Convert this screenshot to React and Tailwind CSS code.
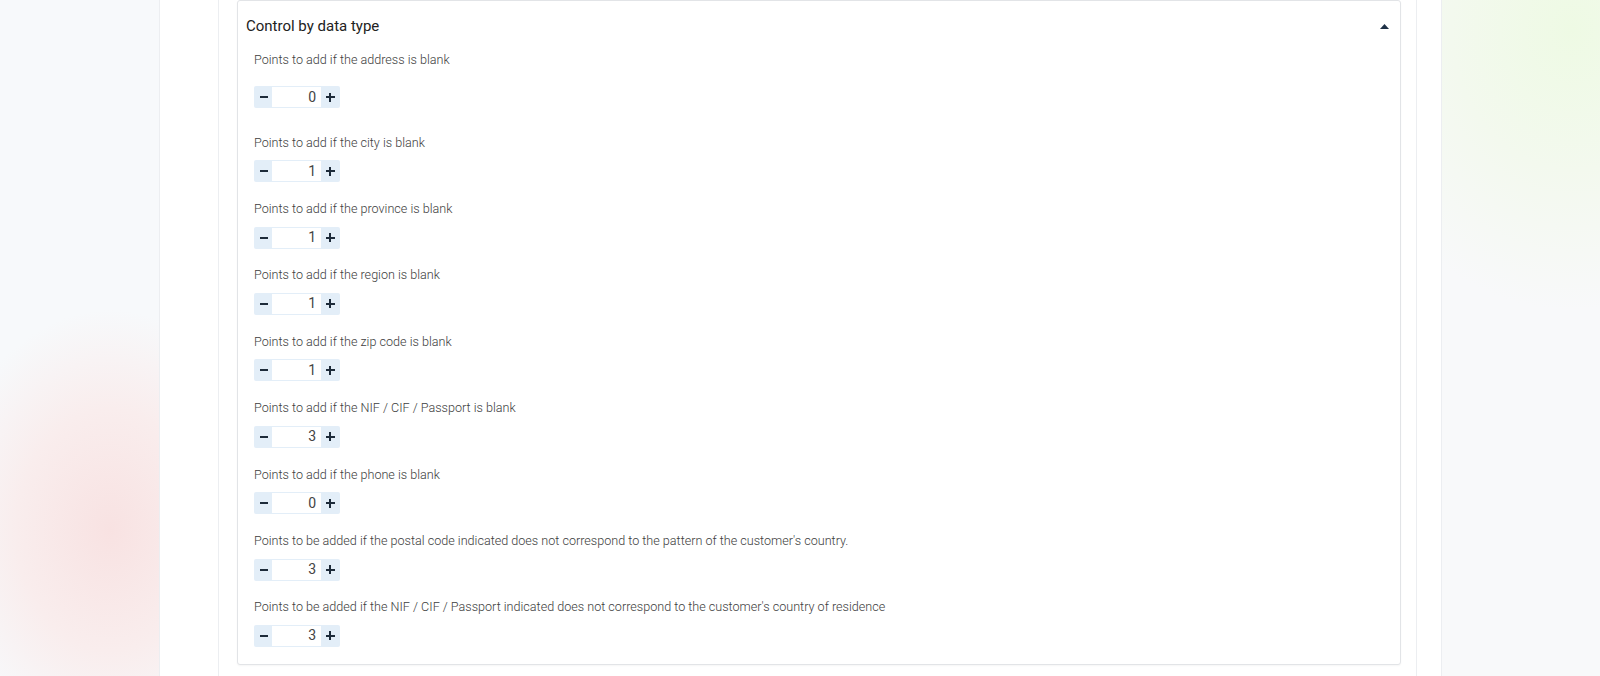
import React from "react";

const items = [
  { label: "Points to add if the address is blank", value: 0 },
  { label: "Points to add if the city is blank", value: 1 },
  { label: "Points to add if the province is blank", value: 1 },
  { label: "Points to add if the region is blank", value: 1 },
  { label: "Points to add if the zip code is blank", value: 1 },
  { label: "Points to add if the NIF / CIF / Passport is blank", value: 3 },
  { label: "Points to add if the phone is blank", value: 0 },
  {
    label:
      "Points to be added if the postal code indicated does not correspond to the pattern of the customer's country.",
    value: 3,
  },
  {
    label:
      "Points to be added if the NIF / CIF / Passport indicated does not correspond to the customer's country of residence",
    value: 3,
  },
];

function Spinner({ value }) {
  return (
    <div className="flex h-[22px] w-[86px] items-stretch rounded-[2px] bg-[#e3eef8] p-[1px]">
      <button className="flex w-[17px] items-center justify-center">
        <span className="block h-[2px] w-[8px] bg-[#1d2b3a]" />
      </button>
      <div className="flex flex-1 items-center justify-end bg-white pr-[5px] text-[14px] text-[#444]">
        {value}
      </div>
      <button className="relative flex w-[18px] items-center justify-center">
        <span className="absolute block h-[2px] w-[9px] bg-[#1d2b3a]" />
        <span className="absolute block h-[9px] w-[2px] bg-[#1d2b3a]" />
      </button>
    </div>
  );
}

export default function App() {
  return (
    <div
      className="flex h-[676px] w-[1600px] overflow-hidden"
      style={{ fontFamily: "Roboto, 'Liberation Sans', sans-serif" }}
    >
      <div className="w-[159px] shrink-0 bg-[radial-gradient(ellipse_170px_220px_at_110px_530px,#f8e2e2_0%,#f9eded_55%,#f7f9fb_100%)]" />
      <div className="w-[1283px] shrink-0 border-x border-[#eceef1] bg-white pl-[58px] pr-[24px]">
        <div className="h-full border-x border-[#eceef1] pl-[18px] pr-[15px]">
          <div className="rounded-[3px] border border-[#e2e4e7] bg-white pb-[17px] shadow-[0_1px_2px_rgba(0,0,0,0.04)]">
            <div className="flex items-center justify-between pl-[8px] pr-[10px] pt-[15px]">
              <h2 className="text-[15px] leading-[21px] text-[#222]">Control by data type</h2>
              <svg width="9" height="5" viewBox="0 0 9 5" className="mr-[1px]">
                <path d="M4.5 0 L9 5 L0 5 Z" fill="#1f3147" />
              </svg>
            </div>
            <div className="mt-[14px] flex flex-col pl-[16px]">
              {items.map((it, i) => (
                <div
                  key={i}
                  className={i === 0 ? "pb-[25.5px]" : "pb-[17.9px] last:pb-0"}
                >
                  <div className="text-[12.6px] font-light leading-[18px] text-[#3d3d3d]">
                    {it.label}
                  </div>
                  <div className={i === 0 ? "mt-[17.2px]" : "mt-[8.5px]"}>
                    <Spinner value={it.value} />
                  </div>
                </div>
              ))}
            </div>
          </div>
        </div>
      </div>
      <div className="flex-1 bg-[radial-gradient(ellipse_240px_280px_at_130px_30px,#eefae4_0%,#f3f9ee_50%,#f8f9fa_100%)]" />
    </div>
  );
}
